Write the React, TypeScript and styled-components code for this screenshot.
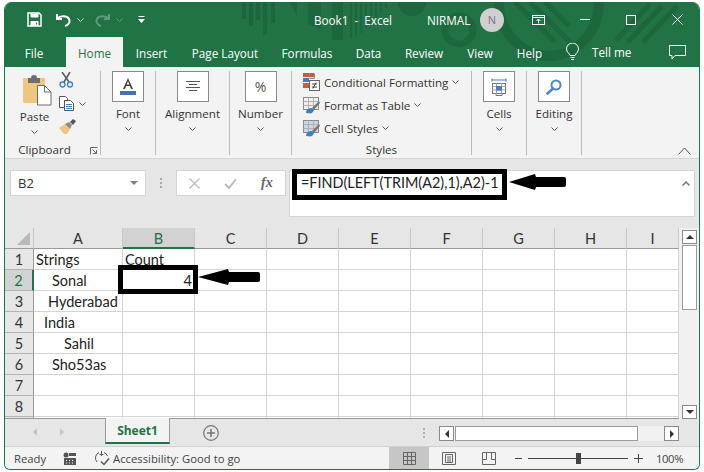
import React from 'react';
import styled, { createGlobalStyle } from 'styled-components';

const GREEN = '#217346';
const DARK = '#1d673e';
const UI_FONT = '"Open Sans", "Noto Sans", sans-serif';
const CELL_FONT = 'Lato, "Open Sans", sans-serif';

const GlobalStyle = createGlobalStyle`
  html, body {
    margin: 0;
    padding: 0;
    background: #fff;
  }
  body {
    width: 704px;
    height: 472px;
    overflow: hidden;
    font-family: ${UI_FONT};
  }
`;

const Page = styled.div`
  padding: 2px 4px 3px 4px;
  width: 704px;
  height: 472px;
  box-sizing: border-box;
`;

const Window = styled.div`
  position: relative;
  height: 467px;
  border: 1px solid ${GREEN};
  border-top: 0;
  border-radius: 8px 8px 6px 6px;
  overflow: hidden;
  background: #e6e6e6;
  display: flex;
  flex-direction: column;
`;

const Header = styled.div`
  position: relative;
  flex: none;
  background: ${GREEN};
`;

const TitleBar = styled.div`
  position: relative;
  height: 35px;
  display: flex;
  align-items: center;
  color: #fff;
  font-size: 11.7px;
`;

const TitleArt = styled.svg`
  position: absolute;
  left: -5px;
  top: -2px;
  pointer-events: none;
`;

const QuickTools = styled.div`
  position: relative;
  width: 309px;
  height: 100%;
  padding-left: 22px;
  box-sizing: border-box;
  display: flex;
  align-items: center;
`;

const QuickIcon = styled.svg<{ $gap?: number }>`
  display: block;
  flex: none;
  margin-left: ${(p) => p.$gap ?? 0}px;
`;

const DocName = styled.span`
  position: relative;
  width: 113px;
  white-space: pre;
`;

const UserName = styled.span`
  position: relative;
  width: 53px;
`;

const Avatar = styled.div`
  position: relative;
  width: 24px;
  height: 24px;
  border-radius: 50%;
  background: #d0d0d0;
  color: #7e6b8f;
  font-size: 11px;
  display: flex;
  align-items: center;
  justify-content: center;
`;

const WindowButton = styled.div<{ $w: number }>`
  position: relative;
  width: ${(p) => p.$w}px;
  height: 100%;
  flex: none;
  display: flex;
  align-items: center;
  justify-content: center;
`;

const TabRow = styled.div`
  position: relative;
  height: 30px;
  display: flex;
  color: #fff;
  font-size: 11.7px;
`;

const Tab = styled.div<{ $w: number; $active?: boolean }>`
  position: relative;
  width: ${(p) => p.$w}px;
  margin-left: ${(p) => (p.$active ? 3 : 0)}px;
  padding-top: 1px;
  box-sizing: border-box;
  display: flex;
  align-items: center;
  justify-content: center;
  background: ${(p) => (p.$active ? '#f3f3f3' : 'transparent')};
  color: ${(p) => (p.$active ? GREEN : '#fff')};
  white-space: nowrap;
`;

const TellMe = styled.div`
  position: relative;
  margin-left: 12px;
  display: flex;
  align-items: center;
  gap: 13px;
  width: 103px;
`;

const Ribbon = styled.div`
  position: relative;
  height: 92px;
  flex: none;
  background: #f3f3f3;
  border-bottom: 1px solid #d6d6d6;
  box-sizing: border-box;
  display: flex;
  color: #333;
  font-size: 11.6px;
`;

const Group = styled.div<{ $w: number }>`
  position: relative;
  width: ${(p) => p.$w}px;
  margin-top: 4px;
  height: 84px;
  flex: none;
  box-sizing: border-box;
  border-right: 1px solid #bcbcbc;
  display: flex;
  flex-direction: column;
  align-items: center;
`;

const BigBox = styled.div`
  width: 32px;
  height: 31px;
  box-sizing: border-box;
  border: 1px solid #8a8a8a;
  background: #fff;
  display: flex;
  align-items: center;
  justify-content: center;
  flex: none;
`;

const BigLabel = styled.div`
  margin-top: 3px;
  line-height: 18px;
  white-space: nowrap;
`;

const Chevron = styled.svg`
  display: block;
  flex: none;
`;

const ChevronSlot = styled.div`
  margin-top: 4px;
`;

const ClipboardTop = styled.div`
  width: 100%;
  height: 68px;
  display: flex;
  padding-left: 17px;
  box-sizing: border-box;
  gap: 7px;
`;

const PasteColumn = styled.div`
  display: flex;
  flex-direction: column;
  align-items: center;
  width: 30px;
  padding-top: 4px;
`;

const PasteLabel = styled.div`
  margin: 2px 5px 0 0;
  line-height: 18px;
`;

const PasteChevron = styled.div`
  margin: 4px 6px 0 0;
`;

const SmallTools = styled.div`
  display: flex;
  flex-direction: column;
  gap: 8px;
  padding-top: 1px;
`;

const SmallTool = styled.div`
  display: flex;
  align-items: center;
  gap: 5px;
`;

const GroupFooter = styled.div<{ $shift?: number }>`
  position: relative;
  width: 100%;
  margin: auto 0 -4px;
  padding-right: ${(p) => p.$shift ?? 0}px;
  box-sizing: border-box;
  text-align: center;
  line-height: 16px;
  height: 17px;
`;

const Launcher = styled.svg`
  position: absolute;
  right: 2px;
  bottom: 4px;
`;

const StyleList = styled.div`
  width: 100%;
  padding: 2px 0 0 11px;
  box-sizing: border-box;
  display: flex;
  flex-direction: column;
  gap: 5px;
  height: 67px;
`;

const StyleRow = styled.div`
  display: flex;
  align-items: center;
  gap: 4px;
  height: 18px;
  white-space: nowrap;
`;

const CollapseButton = styled.svg`
  position: absolute;
  right: 8px;
  bottom: 3px;
`;

const FormulaArea = styled.div`
  position: relative;
  height: 69px;
  flex: none;
  background: #e6e6e6;
  padding: 11px 4px 0 5px;
  box-sizing: border-box;
  display: flex;
  align-items: flex-start;
`;

const NameBox = styled.div`
  width: 136px;
  height: 26px;
  box-sizing: border-box;
  background: #fff;
  border: 1px solid #d4d4d4;
  padding: 0 7px 0 7px;
  display: flex;
  align-items: center;
  justify-content: space-between;
  font-size: 13px;
  color: #333;
`;

const DropArrow = styled.span`
  width: 0;
  height: 0;
  border-left: 4px solid transparent;
  border-right: 4px solid transparent;
  border-top: 4px solid #808080;
`;

const GripDots = styled.div<{ $gap: number; $color: string }>`
  width: 2px;
  height: 10px;
  margin: 8px ${(p) => p.$gap}px 0 14px;
  flex: none;
  background: repeating-linear-gradient(${(p) => p.$color} 0 2px, transparent 2px 4px);
`;

const FunctionBox = styled.div`
  width: 110px;
  height: 26px;
  box-sizing: border-box;
  background: #fff;
  border: 1px solid #d4d4d4;
  display: flex;
  align-items: center;
  padding-left: 12px;
  gap: 24px;
  flex: none;
`;

const FxLabel = styled.span`
  font-family: "Liberation Serif", serif;
  font-style: italic;
  font-size: 14px;
  font-weight: 700;
  color: #666;
`;

const FormulaInput = styled.div`
  margin-left: 3px;
  width: 406px;
  height: 47px;
  box-sizing: border-box;
  background: #fff;
  border: 1px solid #d4d4d4;
  padding: 2px 0 0 11px;
  font-family: ${CELL_FONT};
  font-size: 14.4px;
  line-height: 20px;
  color: #222;
  position: relative;
  white-space: nowrap;
`;

const FormulaCollapse = styled.svg`
  position: absolute;
  right: 4px;
  top: 10px;
`;

const HighlightBox = styled.div<{ $x: number; $y: number; $w: number; $h: number }>`
  position: absolute;
  left: ${(p) => p.$x}px;
  top: ${(p) => p.$y}px;
  width: ${(p) => p.$w}px;
  height: ${(p) => p.$h}px;
  box-sizing: border-box;
  border: 5px solid #000;
  pointer-events: none;
`;

const ArrowMark = styled.svg<{ $x: number; $y: number }>`
  position: absolute;
  left: ${(p) => p.$x}px;
  top: ${(p) => p.$y}px;
  pointer-events: none;
`;

const SheetArea = styled.div`
  height: 191px;
  flex: none;
  display: flex;
  background: #f1f1f1;
`;

const SheetGrid = styled.div`
  width: 674px;
  height: 191px;
  flex: none;
  overflow: hidden;
  display: grid;
  grid-template-columns: 29px 89px repeat(7, 72px) 52px;
  grid-auto-rows: 21px;
  background: #fff;
  font-family: ${CELL_FONT};
  font-size: 14.5px;
  color: #222;
  border-bottom: 1px solid #9a9a9a;
  box-sizing: border-box;
`;

const Corner = styled.div`
  background: #e6e6e6;
  border-right: 1px solid #c8c8c8;
  border-bottom: 1px solid #9a9a9a;
  box-sizing: border-box;
  position: relative;
  &::after {
    content: '';
    position: absolute;
    right: 3px;
    bottom: 3px;
    border-left: 13px solid transparent;
    border-bottom: 13px solid #b9b9b9;
  }
`;

const ColHead = styled.div<{ $active?: boolean }>`
  background: ${(p) => (p.$active ? '#d2d2d2' : '#e6e6e6')};
  border-right: 1px solid #c8c8c8;
  border-bottom: ${(p) => (p.$active ? `2px solid ${GREEN}` : '1px solid #9a9a9a')};
  box-sizing: border-box;
  padding-top: 1px;
  display: flex;
  align-items: center;
  justify-content: center;
  color: ${(p) => (p.$active ? GREEN : '#333')};
`;

const RowHead = styled.div<{ $active?: boolean }>`
  background: ${(p) => (p.$active ? '#d2d2d2' : '#e6e6e6')};
  border-right: ${(p) => (p.$active ? `2px solid ${GREEN}` : '1px solid #9a9a9a')};
  border-bottom: 1px solid #b4b4b4;
  box-sizing: border-box;
  padding-top: 1px;
  display: flex;
  align-items: center;
  justify-content: center;
  color: ${(p) => (p.$active ? GREEN : '#333')};
`;

const Cell = styled.div<{ $right?: boolean }>`
  border-right: 1px solid #d4d4d4;
  border-bottom: 1px solid #d4d4d4;
  box-sizing: border-box;
  padding: 0 2px 0 2px;
  line-height: 22px;
  white-space: pre;
  text-align: ${(p) => (p.$right ? 'right' : 'left')};
`;

const CellText = styled.span<{ $pad: number }>`
  margin-left: ${(p) => p.$pad}px;
`;

const VerticalScroll = styled.div`
  flex: 1;
  display: flex;
  flex-direction: column;
  align-items: flex-end;
  padding: 2px 2px 0 0;
  box-sizing: border-box;
  height: 191px;
`;

const ScrollButton = styled.div<{ $h?: number }>`
  width: 15px;
  height: ${(p) => p.$h ?? 14}px;
  flex: none;
  box-sizing: border-box;
  background: #fff;
  border: 1px solid #8a8a8a;
  display: flex;
  align-items: center;
  justify-content: center;
`;

const ScrollThumbV = styled.div`
  width: 15px;
  height: 65px;
  margin-top: 1px;
  box-sizing: border-box;
  background: #fff;
  border: 1px solid #9a9a9a;
`;

const ScrollSpacer = styled.div`
  flex: 1;
`;

const Triangle = styled.span<{ $dir: 'up' | 'down' | 'left' | 'right'; $color?: string }>`
  width: 0;
  height: 0;
  ${(p) => {
    const c = p.$color ?? '#333';
    if (p.$dir === 'up') return `border-left:4px solid transparent;border-right:4px solid transparent;border-bottom:4px solid ${c};`;
    if (p.$dir === 'down') return `border-left:4px solid transparent;border-right:4px solid transparent;border-top:4px solid ${c};`;
    if (p.$dir === 'left') return `border-top:4px solid transparent;border-bottom:4px solid transparent;border-right:4px solid ${c};`;
    return `border-top:4px solid transparent;border-bottom:4px solid transparent;border-left:4px solid ${c};`;
  }}
`;

const SheetTabs = styled.div`
  height: 28px;
  flex: none;
  background: #e6e6e6;
  display: flex;
  align-items: flex-start;
  border-bottom: 1px solid #d0d0d0;
  box-sizing: border-box;
`;

const NavArrows = styled.div`
  width: 100px;
  height: 26px;
  padding-left: 28px;
  box-sizing: border-box;
  display: flex;
  align-items: center;
  gap: 23px;
  flex: none;
`;

const SheetTab = styled.div`
  width: 65px;
  height: 26px;
  flex: none;
  margin-top: -1px;
  box-sizing: border-box;
  background: #f3f3f3;
  border-left: 1px solid #9a9a9a;
  border-right: 1px solid #9a9a9a;
  border-bottom: 2px solid ${GREEN};
  color: ${GREEN};
  font-weight: 700;
  font-size: 12px;
  display: flex;
  align-items: center;
  justify-content: center;
`;

const AddSheet = styled.svg`
  margin: 6px 0 0 33px;
  flex: none;
`;

const TabGrip = styled(GripDots)`
  margin: 9px 0 0 204px;
`;

const HorizontalScroll = styled.div`
  margin: 7px 0 0 14px;
  width: 240px;
  height: 15px;
  flex: none;
  display: flex;
  background: #f1f1f1;
`;

const ScrollThumbH = styled.div`
  width: 183px;
  height: 15px;
  margin-left: 1px;
  flex: none;
  box-sizing: border-box;
  background: #fff;
  border: 1px solid #9a9a9a;
`;

const StatusBar = styled.div`
  flex: 1;
  background: #f3f3f3;
  display: flex;
  align-items: center;
  font-size: 11.3px;
  color: #444;
  padding-left: 9px;
`;

const StatusText = styled.span<{ $w: number }>`
  white-space: nowrap;
  flex: none;
  width: ${(p) => p.$w}px;
`;

const StatusIcon = styled.svg<{ $gap: number }>`
  flex: none;
  margin: 0 ${(p) => p.$gap}px 0 0;
`;

const ViewButton = styled.div<{ $active?: boolean }>`
  width: 40px;
  height: 100%;
  flex: none;
  display: flex;
  align-items: center;
  justify-content: center;
  background: ${(p) => (p.$active ? '#c6c6c6' : 'transparent')};
`;

const ViewGroup = styled.div`
  margin-left: 126px;
  height: 100%;
  flex: none;
  display: flex;
`;

const ZoomControl = styled.div`
  margin-left: 6px;
  flex: none;
  display: flex;
  align-items: center;
  gap: 6px;
`;

const ZoomTrack = styled.div`
  position: relative;
  width: 100px;
  height: 1px;
  background: #444;
`;

const ZoomThumb = styled.div`
  position: absolute;
  left: 48px;
  top: -5px;
  width: 5px;
  height: 11px;
  background: #444;
`;

const ZoomSign = styled.svg`
  flex: none;
`;

const ZoomValue = styled.span`
  margin-left: 13px;
  flex: none;
  letter-spacing: -0.4px;
`;

const PercentGlyph = styled.span`
  font-size: 14px;
  color: #555;
`;

const SmallChevron = ({ color = '#555' }: { color?: string }) => (
  <Chevron width="7" height="4" viewBox="0 0 7 4" fill="none">
    <path d="M.5.5l3 3 3-3" stroke={color} />
  </Chevron>
);

const PasteIcon = () => (
  <svg width="29" height="31" viewBox="0 0 29 31">
    <rect x="0" y="3" width="22" height="25" rx="1" fill="#eec67f" />
    <path d="M5 3h12v5H5z" fill="#6d6d6d" />
    <path d="M8 3q0-3 3-3t3 3z" fill="#6d6d6d" />
    <path d="M14.5 10.5h7l6.500 6.500v13h-13.500z" fill="#fff" stroke="#6d6d6d" />
    <path d="M21.5 10.5v6.500h6.500" fill="none" stroke="#6d6d6d" />
  </svg>
);

const ScissorsIcon = () => (
  <svg width="15" height="16" viewBox="0 0 15 16" fill="none">
    <path d="M3 0l7 10M11 0l-6 10" stroke="#5e5e5e" strokeWidth="1.6" />
    <circle cx="3.5" cy="12.5" r="2.5" stroke="#3f7ec1" strokeWidth="1.3" />
    <circle cx="11" cy="12.5" r="2.5" stroke="#3f7ec1" strokeWidth="1.3" />
  </svg>
);

const CopyIcon = () => (
  <svg width="15" height="15" viewBox="0 0 15 15" fill="#fff">
    <path d="M.5.5h6l2 2v9h-8z" stroke="#555" />
    <path d="M5.5 4.5h6l3 3v7h-9z" stroke="#555" />
    <path d="M7 8.5h6M7 10.5h6M7 12.5h6" stroke="#3f7ec1" />
  </svg>
);

const BrushIcon = () => (
  <svg width="17" height="15" viewBox="0 0 17 15">
    <path d="M0 9l6-4 5 5-3 5H5z" fill="#eec67f" />
    <path d="M6 5l4-2 3 3-2 4z" fill="#8a8a8a" />
    <path d="M11 3l3-3 3 2-3 4z" fill="#555" />
  </svg>
);

const CondFormatIcon = () => (
  <svg width="17" height="18" viewBox="0 0 17 18">
    <rect x="0" y="0" width="11" height="4" fill="#d2573a" />
    <rect x="0" y="5" width="6" height="4" fill="#3f7ec1" />
    <rect x="0" y="10" width="6" height="5" fill="#d2573a" />
    <path d="M6.5 5.5h5M6.5.5v4M11.5.5v5" stroke="#888" fill="none" />
    <rect x="6.5" y="7.5" width="10" height="10" fill="#fff" stroke="#666" />
    <path d="M9 11h5M9 14h5M13 9.5l-3 6" stroke="#444" fill="none" />
  </svg>
);

const TableStyleIcon = ({ fill }: { fill: string }) => (
  <svg width="17" height="17" viewBox="0 0 17 17">
    <rect x=".5" y=".5" width="15" height="12" fill={fill} stroke="#8a8a8a" />
    <path d="M.5 4.5h15M.5 8.5h15M5.5.5v12M10.5.5v12" stroke="#b0b0b0" fill="none" />
    <path d="M16 4l-7 7 2 2 6-7z" fill="#777" />
    <path d="M3 16q0-3 2-4 2-1 4-1l2 2q-1 3-3 3.500z" fill="#3f7ec1" />
  </svg>
);

const CellsIcon = () => (
  <svg width="16" height="18" viewBox="0 0 16 18" fill="none">
    <path d="M1 .5v3M15 .5v3M1 2h14" stroke="#3f7ec1" />
    <rect x="1.5" y="5.5" width="13" height="10" stroke="#777" />
    <path d="M1.5 8.5h13M1.5 12h13M5.5 5.5v10M10.500 5.5v10" stroke="#aaa" />
    <rect x="5" y="8" width="6" height="4.500" fill="#3f7ec1" />
    <path d="M5 15.5v2h6v-2" stroke="#777" />
  </svg>
);

const SearchIcon = () => (
  <svg width="16" height="16" viewBox="0 0 16 16" fill="none">
    <circle cx="10" cy="6" r="4.500" stroke="#4a86c5" strokeWidth="2" />
    <path d="M7 9.500l-5.500 5" stroke="#4a86c5" strokeWidth="2.600" strokeLinecap="round" />
  </svg>
);

const columns = ['A', 'B', 'C', 'D', 'E', 'F', 'G', 'H', 'I'];

const rows: { a: string; pad: number; b?: string; right?: boolean }[] = [
  { a: 'Strings', pad: 0, b: 'Count' },
  { a: 'Sonal', pad: 16, b: '4', right: true },
  { a: 'Hyderabad', pad: 12 },
  { a: 'India', pad: 8 },
  { a: 'Sahil', pad: 28 },
  { a: 'Sho53as', pad: 16 },
  { a: '', pad: 0 },
  { a: '', pad: 0 },
];

const App = () => {
  return (
    <Page>
      <GlobalStyle />
      <Window>
        <Header>
          <TitleArt width="704" height="67" viewBox="0 0 704 67" fill="none">
            <g fill={DARK}>
              <path d="M242 2h4v17h-4zM249 2h4v24h-4zM256 2h4v18h-4zM263 2h4v33h-4zM271 2h4v21h-4z" />
              <path d="M290 2h7v14z" />
              <path d="M308 2h13v27l-13-5zM332 2h11v38h-11z" />
              <path d="M350 2h2v36h-2zM355 2h2v34h-2zM360 2h2v31h-2zM365 2h2v27h-2zM370 2h2v21h-2zM375 2h2v16h-2zM380 2h2v11h-2zM385 2h2v6h-2z" />
              <path d="M398 2h28a14 14 0 0 1-28 0z" />
            </g>
            <g stroke={DARK} fill="none">
              <circle cx="459" cy="30" r="14" strokeWidth="7" />
              <path d="M499 2a50 54 0 0 0 100 0" strokeWidth="10" />
              <path d="M515 2l40 40M530 2l40 40M545 2l24 24" strokeWidth="5" />
              <path d="M628 42l34-36M643 42l34-36M616 40l34-36" strokeWidth="5" />
            </g>
          </TitleArt>
          <TitleBar>
            <QuickTools>
              <QuickIcon width="15" height="15" viewBox="0 0 15 15" fill="none">
                <path d="M1 1h11l2 2v11H1z" stroke="#fff" strokeWidth="1.5" />
                <path d="M4 1.5v3.500h7V1.5" fill="#fff" stroke="#fff" />
                <path d="M3.5 9h8v5h-8z" fill="#fff" />
                <path d="M9 10.5h1v2H9z" fill={GREEN} />
              </QuickIcon>
              <QuickIcon $gap={14} width="15" height="14" viewBox="0 0 15 14" fill="none">
                <path d="M1 1v5h5" stroke="#fff" strokeWidth="2" />
                <path d="M1.5 5.5C4 2.5 11 2.5 13 6c1.500 3-.5 6-4 7" stroke="#fff" strokeWidth="2" />
              </QuickIcon>
              <QuickIcon $gap={6} width="7" height="4" viewBox="0 0 7 4" fill="none">
                <path d="M.5.5l3 3 3-3" stroke="#d8e6de" />
              </QuickIcon>
              <QuickIcon $gap={11} width="15" height="14" viewBox="0 0 15 14" fill="none">
                <path d="M14 1v5H9" stroke="#5f9c7c" strokeWidth="2" />
                <path d="M13.5 5.5C11 2.5 4 2.5 2 6c-1.500 3 .5 6 4 7" stroke="#5f9c7c" strokeWidth="2" />
              </QuickIcon>
              <QuickIcon $gap={6} width="7" height="4" viewBox="0 0 7 4" fill="none">
                <path d="M.5.5l3 3 3-3" stroke="#5f9c7c" />
              </QuickIcon>
              <QuickIcon $gap={15} width="7" height="7" viewBox="0 0 7 7" fill="#fff">
                <path d="M.5 0h6v1h-6zM0 3h7L3.500 7z" />
              </QuickIcon>
            </QuickTools>
            <DocName>Book1  -  Excel</DocName>
            <UserName>NIRMAL</UserName>
            <Avatar>N</Avatar>
            <WindowButton $w={69}>
              <svg width="13" height="10" viewBox="0 0 13 10" fill="none" stroke="#fff">
                <rect x=".5" y=".5" width="12" height="9" />
                <path d="M.5 2.5h12" />
                <path d="M6.5 8.5v-4M4.500 6l2-2 2 2" />
              </svg>
            </WindowButton>
            <WindowButton $w={24}>
              <svg width="10" height="1" viewBox="0 0 10 1">
                <path d="M0 0h10v1H0z" fill="#fff" />
              </svg>
            </WindowButton>
            <WindowButton $w={68}>
              <svg width="10" height="10" viewBox="0 0 10 10" fill="none" stroke="#fff">
                <rect x=".5" y=".5" width="9" height="9" />
              </svg>
            </WindowButton>
            <WindowButton $w={24}>
              <svg width="11" height="11" viewBox="0 0 11 11" fill="none" stroke="#fff">
                <path d="M.5.5l10 10M10.5.5l-10 10" />
              </svg>
            </WindowButton>
          </TitleBar>

          <TabRow>
            <Tab $w={58}>File</Tab>
            <Tab $w={57} $active>
              Home
            </Tab>
            <Tab $w={57}>Insert</Tab>
            <Tab $w={90}>Page Layout</Tab>
            <Tab $w={74}>Formulas</Tab>
            <Tab $w={49}>Data</Tab>
            <Tab $w={62}>Review</Tab>
            <Tab $w={50}>View</Tab>
            <Tab $w={49}>Help</Tab>
            <TellMe>
              <svg width="13" height="18" viewBox="0 0 13 18" fill="none" stroke="#fff">
                <path d="M4 12.5C3 10 .5 9 .5 6a6 6 0 0 1 12 0c0 3-2.500 4-3.500 6.500z" />
                <path d="M4.500 14.5h4M5 16.5h3" />
              </svg>
              Tell me
            </TellMe>
            <WindowButton $w={17}>
              <svg width="17" height="15" viewBox="0 0 17 15" fill="none" stroke="#fff">
                <path d="M.5.5h16v10H6l-3 3.500v-3.500H.5z" />
              </svg>
            </WindowButton>
          </TabRow>
        </Header>

        <Ribbon>
          <Group $w={96}>
            <ClipboardTop>
              <PasteColumn>
                <PasteIcon />
                <PasteLabel>Paste</PasteLabel>
                <PasteChevron>
                  <SmallChevron />
                </PasteChevron>
              </PasteColumn>
              <SmallTools>
                <ScissorsIcon />
                <SmallTool>
                  <CopyIcon />
                  <SmallChevron />
                </SmallTool>
                <BrushIcon />
              </SmallTools>
            </ClipboardTop>
            <GroupFooter $shift={16}>
              Clipboard
              <Launcher width="8" height="8" viewBox="0 0 8 8" fill="none" stroke="#666">
                <path d="M.5 7.5V.5h7M2.500 2.500l4 4M3 6.500h3.500V3" />
              </Launcher>
            </GroupFooter>
          </Group>

          <Group $w={55}>
            <BigBox>
              <svg width="16" height="17" viewBox="0 0 16 17">
                <path d="M8 0l5 11h-2L9.800 8H6.200L5 11H3zM8 3L6.800 6.500h2.400z" fill="#444" fillRule="evenodd" />
                <rect x="0" y="13" width="16" height="4" fill="#4472b0" />
              </svg>
            </BigBox>
            <BigLabel>Font</BigLabel>
            <ChevronSlot>
              <SmallChevron />
            </ChevronSlot>
          </Group>

          <Group $w={74}>
            <BigBox>
              <svg width="14" height="11" viewBox="0 0 14 11" fill="none" stroke="#555">
                <path d="M0 .5h14M3 3.500h8M0 6.500h14M3 9.500h8" />
              </svg>
            </BigBox>
            <BigLabel>Alignment</BigLabel>
            <ChevronSlot>
              <SmallChevron />
            </ChevronSlot>
          </Group>

          <Group $w={62}>
            <BigBox>
              <PercentGlyph>%</PercentGlyph>
            </BigBox>
            <BigLabel>Number</BigLabel>
            <ChevronSlot>
              <SmallChevron />
            </ChevronSlot>
          </Group>

          <Group $w={180}>
            <StyleList>
              <StyleRow>
                <CondFormatIcon />
                Conditional Formatting
                <SmallChevron />
              </StyleRow>
              <StyleRow>
                <TableStyleIcon fill="#f0f0f0" />
                Format as Table
                <SmallChevron />
              </StyleRow>
              <StyleRow>
                <TableStyleIcon fill="#c8d6ea" />
                Cell Styles
                <SmallChevron />
              </StyleRow>
            </StyleList>
            <GroupFooter>Styles</GroupFooter>
          </Group>

          <Group $w={55}>
            <BigBox>
              <CellsIcon />
            </BigBox>
            <BigLabel>Cells</BigLabel>
            <ChevronSlot>
              <SmallChevron />
            </ChevronSlot>
          </Group>

          <Group $w={55}>
            <BigBox>
              <SearchIcon />
            </BigBox>
            <BigLabel>Editing</BigLabel>
            <ChevronSlot>
              <SmallChevron />
            </ChevronSlot>
          </Group>

          <CollapseButton width="13" height="8" viewBox="0 0 13 8" fill="none" stroke="#555">
            <path d="M.5 7.5l6-6.500 6 6.500" />
          </CollapseButton>
        </Ribbon>

        <FormulaArea>
          <NameBox>
            B2
            <DropArrow />
          </NameBox>
          <GripDots $gap={14} $color="#a8a8a8" />
          <FunctionBox>
            <svg width="11" height="11" viewBox="0 0 11 11" fill="none" stroke="#bdbdbd" strokeWidth="1.4">
              <path d="M.5.5l10 10M10.5.5l-10 10" />
            </svg>
            <svg width="13" height="11" viewBox="0 0 13 11" fill="none" stroke="#bdbdbd" strokeWidth="2">
              <path d="M1 6l4 4 7-9" />
            </svg>
            <FxLabel>fx</FxLabel>
          </FunctionBox>
          <FormulaInput>
            =FIND(LEFT(TRIM(A2),1),A2)-1
            <FormulaCollapse width="8" height="5" viewBox="0 0 8 5" fill="none" stroke="#777" strokeWidth="1.5">
              <path d="M.5 4.5L4 1l3.500 3.500" />
            </FormulaCollapse>
          </FormulaInput>
        </FormulaArea>

        <SheetArea>
          <SheetGrid>
            <Corner />
            {columns.map((c) => (
              <ColHead key={c} $active={c === 'B'}>
                {c}
              </ColHead>
            ))}
            {rows.map((row, i) => (
              <React.Fragment key={i}>
                <RowHead $active={i === 1}>{i + 1}</RowHead>
                <Cell>
                  <CellText $pad={row.pad}>{row.a}</CellText>
                </Cell>
                <Cell $right={row.right}>{row.b}</Cell>
                {columns.slice(2).map((c) => (
                  <Cell key={c} />
                ))}
              </React.Fragment>
            ))}
            <RowHead />
            {columns.map((c) => (
              <Cell key={c} />
            ))}
          </SheetGrid>
          <VerticalScroll>
            <ScrollButton>
              <Triangle $dir="up" />
            </ScrollButton>
            <ScrollThumbV />
            <ScrollSpacer />
            <ScrollButton>
              <Triangle $dir="down" />
            </ScrollButton>
          </VerticalScroll>
        </SheetArea>

        <SheetTabs>
          <NavArrows>
            <Triangle $dir="left" $color="#c4c4c4" />
            <Triangle $dir="right" $color="#c4c4c4" />
          </NavArrows>
          <SheetTab>Sheet1</SheetTab>
          <AddSheet width="16" height="16" viewBox="0 0 16 16" fill="none" stroke="#777">
            <circle cx="8" cy="8" r="7.3" strokeWidth="1.2" />
            <path d="M8 4v8M4 8h8" strokeWidth="1.6" />
          </AddSheet>
          <TabGrip $gap={0} $color="#b4b4b4" />
          <HorizontalScroll>
            <ScrollButton $h={15}>
              <Triangle $dir="left" />
            </ScrollButton>
            <ScrollThumbH />
            <ScrollSpacer />
            <ScrollButton $h={15}>
              <Triangle $dir="right" />
            </ScrollButton>
          </HorizontalScroll>
        </SheetTabs>

        <StatusBar>
          <StatusText $w={49}>Ready</StatusText>
          <StatusIcon $gap={18} width="13" height="13" viewBox="0 0 13 13">
            <circle cx="3" cy="3" r="2.5" fill="#555" />
            <path d="M6 1h7v3H6zM1 6h12v7H1z" fill="#555" />
            <path d="M3 8h1v1H3zM6 8h1v1H6zM9 8h1v1H9zM3 10.5h1v1H3zM6 10.5h1v1H6zM9 10.5h1v1H9z" fill="#fff" />
          </StatusIcon>
          <StatusIcon $gap={3} width="16" height="15" viewBox="0 0 16 15" fill="none" stroke="#555">
            <path d="M5 1.5A6 6 0 0 0 3 11M10 1.5a6 6 0 0 1 3.500 3.500" />
            <path d="M7.5 0v5M5.500 3.500h4" />
            <path d="M7 10.5l3 3 5-6" strokeWidth="1.5" />
          </StatusIcon>
          <StatusText $w={150}>Accessibility: Good to go</StatusText>
          <ViewGroup>
            <ViewButton $active>
              <svg width="13" height="13" viewBox="0 0 13 13" fill="none" stroke="#666">
                <path d="M.5.5h12v12H.5zM.5 4.500h12M.5 8.500h12M4.500.5v12M8.500.5v12" />
              </svg>
            </ViewButton>
            <ViewButton>
              <svg width="14" height="13" viewBox="0 0 14 13" fill="none" stroke="#666">
                <path d="M.5.5h13v12H.5z" />
                <path d="M3.5 2.5h7v8h-7zM5 5h4M5 7h4M5 9h4" />
              </svg>
            </ViewButton>
            <ViewButton>
              <svg width="14" height="13" viewBox="0 0 14 13" fill="none" stroke="#666">
                <path d="M.5.5h13v12H.5zM.5 7.500h4M13.500 7.500h-4M4.500.5v7M9.500.5v7" />
              </svg>
            </ViewButton>
          </ViewGroup>
          <ZoomControl>
            <ZoomSign width="7" height="1" viewBox="0 0 7 1">
              <path d="M0 0h7v1H0z" fill="#444" />
            </ZoomSign>
            <ZoomTrack>
              <ZoomThumb />
            </ZoomTrack>
            <ZoomSign width="9" height="9" viewBox="0 0 9 9">
              <path d="M4 0h1v9H4zM0 4h9v1H0z" fill="#444" />
            </ZoomSign>
          </ZoomControl>
          <ZoomValue>100%</ZoomValue>
        </StatusBar>

        <HighlightBox $x={287} $y={167} $w={215} $h={31} />
        <ArrowMark $x={504} $y={172} width="57" height="16" viewBox="0 0 57 16">
          <path d="M0 8L26 0l1 3h28q2 0 2 2v6q0 2-2 2H27l-1 3z" fill="#000" />
        </ArrowMark>
        <HighlightBox $x={113} $y={263} $w={80} $h={29} />
        <ArrowMark $x={193} $y={267} width="62" height="16" viewBox="0 0 62 16">
          <path d="M0 8L30 0l1 3h29q2 0 2 2v6q0 2-2 2H31l-1 3z" fill="#000" />
        </ArrowMark>
      </Window>
    </Page>
  );
};

export default App;
